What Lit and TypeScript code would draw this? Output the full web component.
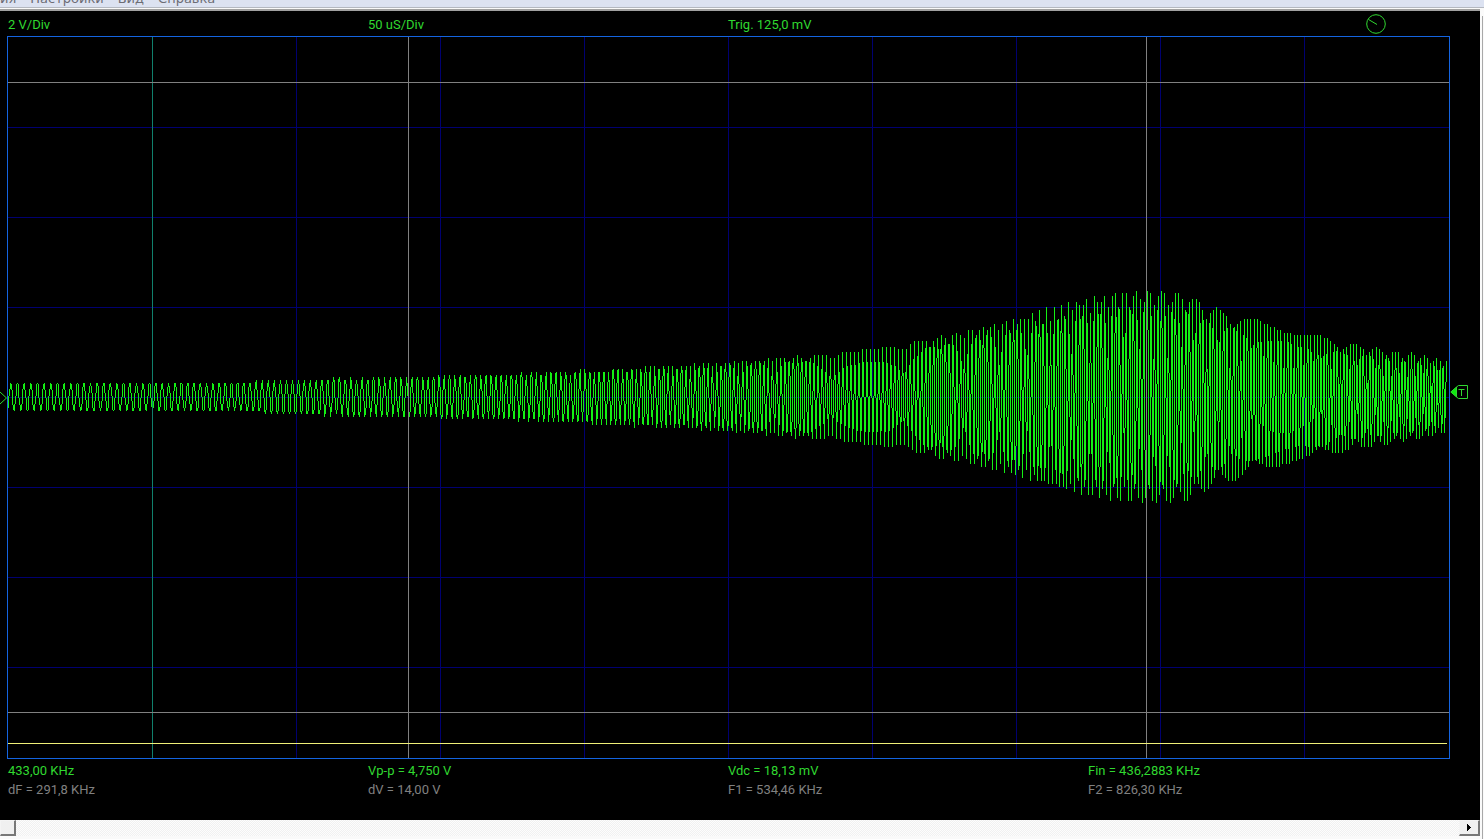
import { LitElement, html, svg, css } from "lit";
import { customElement } from "lit/decorators.js";

type Knot = [number, number];

const W = 1443;
const H = 723;

// Envelope and frequency (cycles per column) along the sweep.
const TOP: Knot[] = [[0, 14], [230, 15], [300, 18], [400, 20], [540, 25], [693, 33], [800, 42], [863, 47], [933, 61], [1000, 77], [1063, 96], [1110, 105], [1153, 107], [1180, 103], [1205, 90], [1233, 82], [1293, 65], [1353, 52], [1441, 37]];
const FREQ: Knot[] = [[0, 0.149], [100, 0.152], [268, 0.165], [403, 0.184], [493, 0.197], [593, 0.212], [673, 0.225], [858, 0.25], [1143, 0.285], [1441, 0.318]];

const lerp = (knots: Knot[], x: number): number => {
  let i = 1;
  while (i < knots.length - 1 && knots[i][0] < x) i++;
  const [x0, y0] = knots[i - 1];
  const [x1, y1] = knots[i];
  return y0 + ((y1 - y0) * (x - x0)) / (x1 - x0);
};

// Samples snap to whole columns; neighbouring columns meet halfway.
function trace(): string {
  const centre = 361;
  const quantum = 2.8;
  const perColumn = 1.5;
  const lo: number[] = new Array(1441).fill(Infinity);
  const hi: number[] = new Array(1441).fill(-Infinity);
  const mark = (col: number, y: number) => {
    lo[col] = Math.min(lo[col], y);
    hi[col] = Math.max(hi[col], y);
  };
  let phase = -0.13;
  let prevCol = 1;
  let prevY = centre;
  for (let n = 0; n < 1439 * perColumn; n++) {
    const x = n / perColumn;
    const col = 1 + Math.floor(x);
    const v = lerp(TOP, x) * Math.sin(phase * 2 * Math.PI);
    const y = centre - Math.round(v / quantum) * quantum;
    if (col !== prevCol) {
      const mid = (y + prevY) / 2;
      mark(prevCol, mid);
      mark(col, mid);
    }
    mark(col, y);
    prevCol = col;
    prevY = y;
    phase += lerp(FREQ, x) / perColumn;
  }
  let d = "";
  for (let i = 1; i <= prevCol; i++) {
    const top = Math.round(lo[i]);
    d += `M${i + 0.5} ${top}V${Math.max(top + 1, Math.round(hi[i]))}`;
  }
  return d;
}

const WAVE = trace();
const GRID_X = [289, 433, 577, 721, 865, 1009, 1153, 1297];
const GRID_Y = [91, 181, 271, 361, 451, 541, 631];

@customElement("scope-plot")
export class ScopePlot extends LitElement {
  static styles = css`
    :host { display: block; }
    .plot { display: block; width: 100%; height: 723px; shape-rendering: crispEdges; }
    .line { fill: none; stroke-width: 1; }
    .grid { stroke: #000070; }
    .cursor { stroke: #808080; }
    .start { stroke: #10806c; }
    .logic { stroke: #f0f078; }
    .wave { stroke: #14f014; }
    .frame { stroke: #1464e0; }
  `;
  render() {
    return html`<svg class="plot" viewBox="0 0 ${W} ${H}" preserveAspectRatio="none" role="img" aria-label="Waveform">
      ${GRID_X.map((x) => svg`<path class="line grid" d="M${x + 0.5} 1V722" />`)}
      ${GRID_Y.map((y) => svg`<path class="line grid" d="M1 ${y + 0.5}H1442" />`)}
      <path class="line wave" d=${WAVE} />
      <path class="line start" d="M145.5 1V722" />
      <path class="line cursor" d="M401.5 1V722M1139.5 1V722M1 46.5H1442M1 676.5H1442" />
      <path class="line logic" d="M1 707.5H1440" />
      <rect class="line frame" x="0.5" y="0.5" width="1442" height="722" />
    </svg>`;
  }
}

@customElement("app-root")
export class AppRoot extends LitElement {
  static styles = css`
    :host {
      display: flex;
      flex-direction: column;
      min-height: 100vh;
      background: #fafafa;
      font: 13px/19px Roboto, "Liberation Sans", sans-serif;
      overflow: hidden;
    }
    .menu {
      display: flex;
      align-items: flex-end;
      gap: 14px;
      height: 7px;
      background: #dce2f1;
      border-bottom: 1px solid #b4b8c0;
      overflow: hidden;
    }
    .item {
      flex: none;
      padding: 0;
      border: 0;
      background: none;
      color: #6c6c74;
      font: 13px/17px "DejaVu Sans", sans-serif;
    }
    .window {
      display: flex;
      flex: 1;
    }
    .client {
      flex: 1;
      min-width: 0;
      display: flex;
      flex-direction: column;
      margin-top: 1px;
      border-top: 2px solid #a0a0a0;
    }
    .edge {
      width: 1px;
      margin: 8px 1px 0 2px;
      background: #a8a8a8;
    }
    .scope {
      flex: 1;
      display: grid;
      grid-template-columns: 7px minmax(0, 1fr) 30px;
      grid-template-rows: 25px auto 1fr;
      background: #000;
      color: #30d830;
    }
    .readouts {
      grid-column: 2;
      display: grid;
      grid-template-columns: repeat(4, minmax(0, 1fr));
      align-content: start;
      padding: 0 2px 0 1px;
      white-space: nowrap;
    }
    .head { padding-top: 4px; }
    .foot { padding-top: 2px; }
    .muted { color: #808080; }
    .dial { justify-self: end; margin: -1px 62px 0 0; }
    .zero { grid-column: 1; align-self: center; }
    .trigger { grid-column: 3; align-self: center; margin-bottom: 12px; }
    .glyph { display: block; fill: none; stroke: #30d830; }
    .solid { fill: #10e810; }
    .scroll {
      display: flex;
      justify-content: space-between;
      height: 16px;
      margin-bottom: 3px;
      background: repeating-conic-gradient(#f1f1f1 0 25%, #fdfdfd 0 50%) 0 0 / 2px 2px;
    }
    .knob {
      box-sizing: border-box;
      height: 16px;
      padding: 0;
      border: solid;
      border-width: 1px 2px 2px 1px;
      border-color: #f4f4f4 #787878 #787878 #f4f4f4;
      background: #f0f0f0;
    }
    .thumb { width: 16px; }
    .next { width: 21px; }
    .arrow { display: block; margin: 0 auto; fill: #000; shape-rendering: crispEdges; }
  `;

  render() {
    return html`
      <nav class="menu">
        ${["ия", "Настройки", "Вид", "Справка"].map((t) => html`<button class="item">${t}</button>`)}
      </nav>
      <div class="window">
        <main class="client">
          <div class="scope">
            <div class="readouts head">
              <span>2 V/Div</span><span>50 uS/Div</span><span>Trig. 125,0 mV</span>
              <svg class="glyph dial" width="20" height="20" viewBox="0 0 20 20">
                <circle cx="10" cy="10" r="9.3" /><path d="M2.5 5.5L11 10.5" />
              </svg>
            </div>
            <svg class="glyph zero" width="7" height="14" viewBox="0 0 7 14"><path d="M0 1L6.5 7L0 13" /></svg>
            <scope-plot></scope-plot>
            <svg class="glyph trigger" width="19" height="16" viewBox="0 0 19 16">
              <path d="M6.5 3L8.5 1.5H17.5V14.5H8.5L6.5 13" /><path class="solid" d="M0.8 8L6.5 3V13Z" />
              <path d="M8.5 5.5H14.5M11.5 5.5V12" />
            </svg>
            <div class="readouts foot">
              <span>433,00 KHz</span><span>Vp-p = 4,750 V</span><span>Vdc = 18,13 mV</span><span>Fin = 436,2883 KHz</span>
              <span class="muted">dF = 291,8 KHz</span><span class="muted">dV = 14,00 V</span><span class="muted">F1 = 534,46 KHz</span><span class="muted">F2 = 826,30 KHz</span>
            </div>
          </div>
          <div class="scroll">
            <button class="knob thumb" aria-label="Scroll position"></button>
            <button class="knob next" aria-label="Scroll right">
              <svg class="arrow" width="4" height="7" viewBox="0 0 4 7"><path d="M0 0h1v1h1v1h1v1h1v1h-1v1h-1v1h-1v1h-1z" /></svg>
            </button>
          </div>
        </main>
        <div class="edge"></div>
      </div>
    `;
  }
}
